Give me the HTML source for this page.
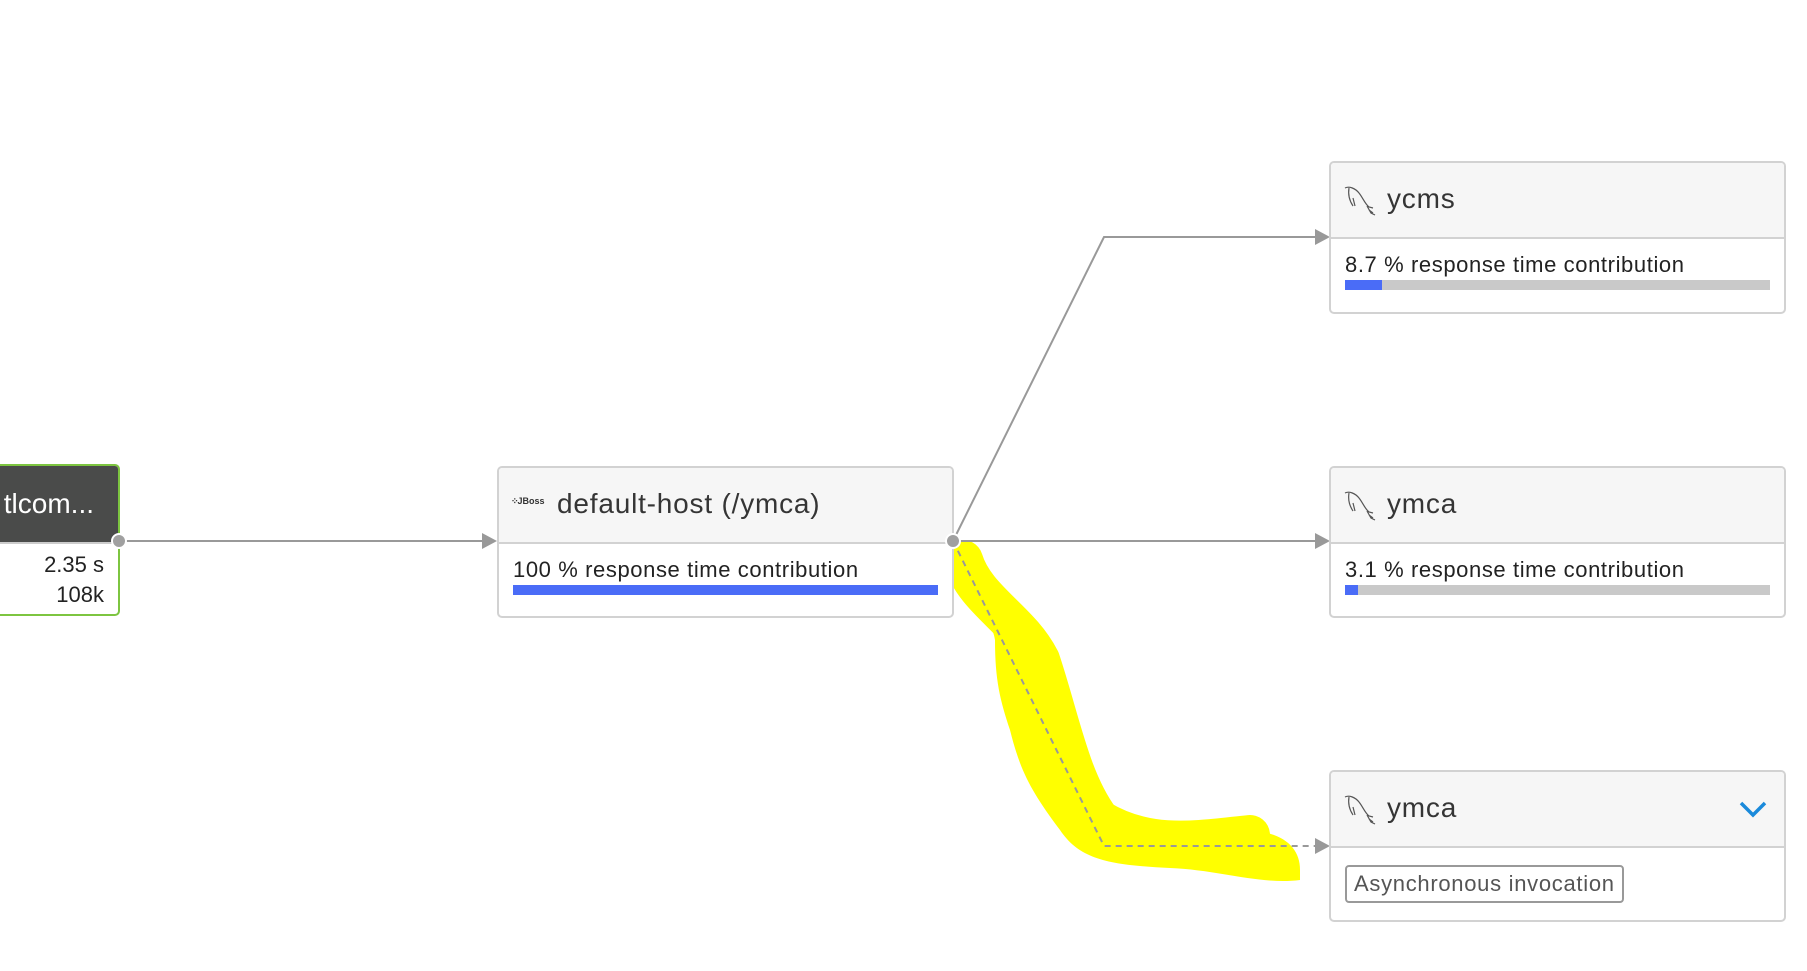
<!DOCTYPE html>
<html><head><meta charset="utf-8"><style>
html,body{margin:0;padding:0;background:#fff;width:1807px;height:971px;overflow:hidden;font-family:"Liberation Sans",sans-serif;}
.card{position:absolute;border:2px solid #d2d2d2;border-radius:5px;background:#fff;box-sizing:border-box;overflow:hidden}
.hdr{position:absolute;left:0;right:0;top:0;height:74px;background:#f6f6f6;border-bottom:2px solid #d2d2d2;}
.title{position:absolute;top:20px;font-size:28px;color:#353535;letter-spacing:0.8px}
.lbl{position:absolute;left:14px;top:89px;font-size:22px;color:#222;letter-spacing:0.6px}
.bar{position:absolute;left:14px;right:14px;top:117px;height:10px;background:#c9c9c9}
.bar i{display:block;height:100%;background:#4a6cf7}
svg{position:absolute;left:0;top:0}
</style></head><body>
<svg width="1807" height="971">
<path d="M965 557 C 985 600, 1030 640, 1050 690 C 1060 740, 1070 780, 1100 820 C 1130 850, 1180 830, 1240 830 C 1280 830, 1300 845, 1300 870 L1300 880 C 1260 885, 1220 870, 1170 868 C 1110 865, 1080 860, 1060 830 C 1030 790, 1020 770, 1010 730 C 1000 700, 995 680, 995 640 C 990 610, 965 600, 963 580 Z" fill="#ffff00"/>
<path d="M963 560 C 975 600, 1020 620, 1040 660 C 1060 720, 1070 780, 1100 820 C 1150 850, 1200 840, 1250 835" stroke="#ffff00" stroke-width="40" fill="none" stroke-linecap="round"/>
<line x1="119" y1="541" x2="484" y2="541" stroke="#999" stroke-width="2"/>
<polygon points="482,533 497,541 482,549" fill="#999"/>
<polyline points="953,541 1104,237 1315,237" stroke="#999" stroke-width="2" fill="none"/>
<polygon points="1315,229 1330,237 1315,245" fill="#999"/>
<line x1="953" y1="541" x2="1315" y2="541" stroke="#999" stroke-width="2"/>
<polygon points="1315,533 1330,541 1315,549" fill="#999"/>
<polyline points="953,541 1104,846 1315,846" stroke="#999" stroke-width="2" stroke-dasharray="6,5" fill="none"/>
<polygon points="1315,838 1330,846 1315,854" fill="#999"/>
</svg>

<div class="card" style="left:-10px;top:464px;width:130px;height:152px;border-color:#7dc540">
 <div class="hdr" style="height:76px;background:#4a4b4a;border-bottom:2px solid #ccc"></div>
 <div style="position:absolute;right:24px;top:22px;font-size:28px;color:#fff">tlcom...</div>
 <div style="position:absolute;right:14px;top:86px;font-size:22px;color:#222">2.35 s</div>
 <div style="position:absolute;right:14px;top:116px;font-size:22px;color:#222">108k</div>
</div>

<div class="card" style="left:497px;top:466px;width:457px;height:152px;">
 <div class="hdr"></div>
 <div style="position:absolute;left:12px;top:28px;font-size:9px;color:#333;font-weight:bold"><span style="letter-spacing:-1px">⁘</span>JBoss</div>
 <div class="title" style="left:58px">default-host (/ymca)</div>
 <div class="lbl">100 % response time contribution</div>
 <div class="bar" style="background:#4a6cf7"></div>
</div>
<svg width="1807" height="971" style="pointer-events:none">
<circle cx="119" cy="541" r="7" fill="#a0a0a0" stroke="#fff" stroke-width="2"/>
<circle cx="953" cy="541" r="7" fill="#a0a0a0" stroke="#fff" stroke-width="2"/>
</svg>

<div class="card" style="left:1329px;top:161px;width:457px;height:153px;">
 <div class="hdr"></div>
 <svg width="36" height="34" style="left:12px;top:21px" viewBox="0 0 36 34"><path d="M2 4 C6 2 12 4 16 9 C20 14 22 20 26 23 L30 24 M6 4 C5 10 6 16 10 22 M10 14 L12 22 M24 22 L28 29 L32 31 M26 26 L30 29" stroke="#555" stroke-width="1.2" fill="none"/></svg>
 <div class="title" style="left:56px">ycms</div>
 <div class="lbl">8.7 % response time contribution</div>
 <div class="bar"><i style="width:8.7%"></i></div>
</div>

<div class="card" style="left:1329px;top:466px;width:457px;height:152px;">
 <div class="hdr"></div>
 <svg width="36" height="34" style="left:12px;top:21px" viewBox="0 0 36 34"><path d="M2 4 C6 2 12 4 16 9 C20 14 22 20 26 23 L30 24 M6 4 C5 10 6 16 10 22 M10 14 L12 22 M24 22 L28 29 L32 31 M26 26 L30 29" stroke="#555" stroke-width="1.2" fill="none"/></svg>
 <div class="title" style="left:56px">ymca</div>
 <div class="lbl">3.1 % response time contribution</div>
 <div class="bar"><i style="width:3.1%"></i></div>
</div>

<div class="card" style="left:1329px;top:770px;width:457px;height:152px;">
 <div class="hdr"></div>
 <svg width="36" height="34" style="left:12px;top:21px" viewBox="0 0 36 34"><path d="M2 4 C6 2 12 4 16 9 C20 14 22 20 26 23 L30 24 M6 4 C5 10 6 16 10 22 M10 14 L12 22 M24 22 L28 29 L32 31 M26 26 L30 29" stroke="#555" stroke-width="1.2" fill="none"/></svg>
 <div class="title" style="left:56px">ymca</div>
 <svg width="30" height="20" style="left:407px;top:28px" viewBox="0 0 30 20"><polyline points="3,3 15,15 27,3" stroke="#1a8adb" stroke-width="3.5" fill="none"/></svg>
 <div style="position:absolute;left:14px;top:93px;border:2px solid #999;border-radius:4px;padding:4px 7px;font-size:22px;color:#555;letter-spacing:0.7px">Asynchronous invocation</div>
</div>
</body></html>
